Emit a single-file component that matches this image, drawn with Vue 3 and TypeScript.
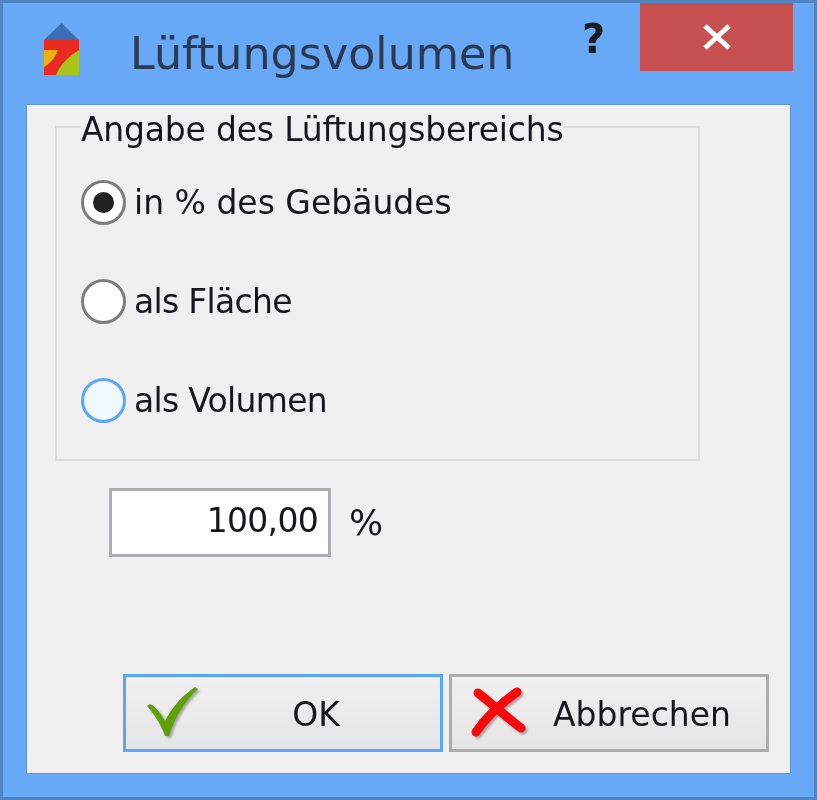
<script setup lang="ts">
const options = [
  { label: "in % des Gebäudes", state: "checked", tight: false },
  { label: "als Fläche", state: "", tight: true },
  { label: "als Volumen", state: "hover", tight: true },
];
</script>

<template>
  <div class="window">
    <header class="titlebar">
      <svg class="app-icon" viewBox="0 0 35 52" width="35" height="52">
        <path d="M0 17 17.5 0 35 17Z" fill="#3a6fb8" />
        <rect y="17" width="35" height="35" fill="#a8c31a" />
        <path d="M0 18H20L0 48Z" fill="#f4ae0c" />
        <path d="M0 17H35V27C25 33 16 42 12 52H0V44C5 41 11 36 14 27H0Z" fill="#ea2a20" />
      </svg>
      <h1 class="title">Lüftungsvolumen</h1>
      <span class="help">?</span>
      <div class="close">
        <svg viewBox="0 0 30 26" width="30" height="26">
          <path d="M3 2 27 24M27 2 3 24" stroke="#fff" stroke-width="5" />
        </svg>
      </div>
    </header>

    <main class="client">
      <section class="group">
        <span class="legend">Angabe des Lüftungsbereichs</span>
        <label v-for="o in options" :key="o.label" class="option" :class="{ tight: o.tight }">
          <span class="radio" :class="o.state"></span>
          {{ o.label }}
        </label>
      </section>

      <div class="value-row">
        <div class="field">100,00</div>
        <span class="unit">%</span>
      </div>

      <footer class="buttons">
        <button class="btn default">
          <svg class="btn-icon" viewBox="0 0 56 52" width="56" height="52">
            <path d="M2 20 5 18C10 20 15 26 20 35 27 21 38 9 50 1L53 3C41 14 30 30 24 50H20C16 38 9 28 2 20Z" fill="#5f9f08" />
          </svg>
          <span>OK</span>
        </button>
        <button class="btn">
          <svg class="btn-icon" viewBox="0 0 56 52" width="56" height="52">
            <path d="M7 7C20 17 34 30 50 42M46 6C32 16 16 30 5 46" stroke="#f40a0a" stroke-width="9" stroke-linecap="round" fill="none" />
          </svg>
          <span>Abbrechen</span>
        </button>
      </footer>
    </main>
  </div>
</template>

<style>
html,
body {
  margin: 0;
  background: #66a8f5;
}
</style>

<style scoped>
.window {
  box-sizing: border-box;
  width: 817px;
  height: 800px;
  border: 3px solid #5085c4;
  background: #67a9f6;
  display: flex;
  flex-direction: column;
  font-family: "DejaVu Sans", sans-serif;
  font-size: 33px;
  color: #16161c;
  overflow: hidden;
  filter: blur(0.6px);
}
.titlebar {
  height: 102px;
  flex: none;
  display: flex;
  align-items: flex-start;
}
.app-icon {
  margin: 20px 0 0 41px;
}
.title {
  margin: 25px 0 0 51px;
  font-size: 44.4px;
  line-height: 52px;
  font-weight: 400;
  color: #2b3a52;
  width: 452px;
  white-space: nowrap;
}
.help {
  margin: 13px 0 0 0;
  font-size: 40px;
  line-height: 46px;
  font-weight: 700;
  width: 58px;
  color: #1c1c1c;
}
.close {
  width: 153px;
  height: 68px;
  background: #c75050;
  display: flex;
  align-items: center;
  justify-content: center;
}
.client {
  box-sizing: border-box;
  margin-left: 24px;
  width: 763px;
  height: 668px;
  background: #f0f0f0;
  box-shadow: 0 0 0 1px #5f93d2;
  padding: 21px 0 0 28px;
  display: flex;
  flex-direction: column;
}
.group {
  box-sizing: border-box;
  width: 645px;
  height: 335px;
  padding: 25px 0 0 24px;
  border: 2px solid #dcdcdc;
  position: relative;
}
.legend {
  position: absolute;
  left: 24px;
  top: -16px;
  line-height: 36px;
  white-space: nowrap;
  letter-spacing: -0.2px;
  background: #f0f0f0;
}
.option {
  height: 99px;
  display: flex;
  align-items: center;
  gap: 8px;
}
.option.tight {
  letter-spacing: -0.7px;
}
.radio {
  box-sizing: border-box;
  width: 45px;
  height: 45px;
  flex: none;
  border-radius: 50%;
  border: 3px solid #7d7d7d;
  background: #fff;
  position: relative;
}
.radio.checked::after {
  content: "";
  position: absolute;
  inset: 9px;
  border-radius: 50%;
  background: #222;
}
.radio.hover {
  border-color: #5aa6ff;
  background: #f1f7ff;
}
.value-row {
  display: flex;
  align-items: center;
  gap: 18px;
  margin: 27px 0 0 54px;
}
.field {
  box-sizing: border-box;
  width: 222px;
  height: 69px;
  border: 3px solid #abadb3;
  background: #fff;
  text-align: right;
  line-height: 60px;
  padding-right: 10px;
  letter-spacing: -0.7px;
}
.unit {
  font-size: 36px;
}
.buttons {
  display: flex;
  gap: 6px;
  margin: auto 0 21px 68px;
}
.btn {
  box-sizing: border-box;
  width: 320px;
  height: 78px;
  padding: 3px 0 0;
  border: 3px solid #adadad;
  background: linear-gradient(#f0f0f0, #e5e5e5);
  font: inherit;
  color: inherit;
  display: flex;
  align-items: center;
  position: relative;
}
.btn.default {
  border-color: #5aa6ff;
}
.btn-icon {
  position: absolute;
  left: 19px;
  top: 9px;
  filter: drop-shadow(2px 2px 1px rgba(0, 0, 0, 0.3));
}
.btn span {
  margin-left: 66px;
  flex: 1;
  text-align: center;
}
</style>
